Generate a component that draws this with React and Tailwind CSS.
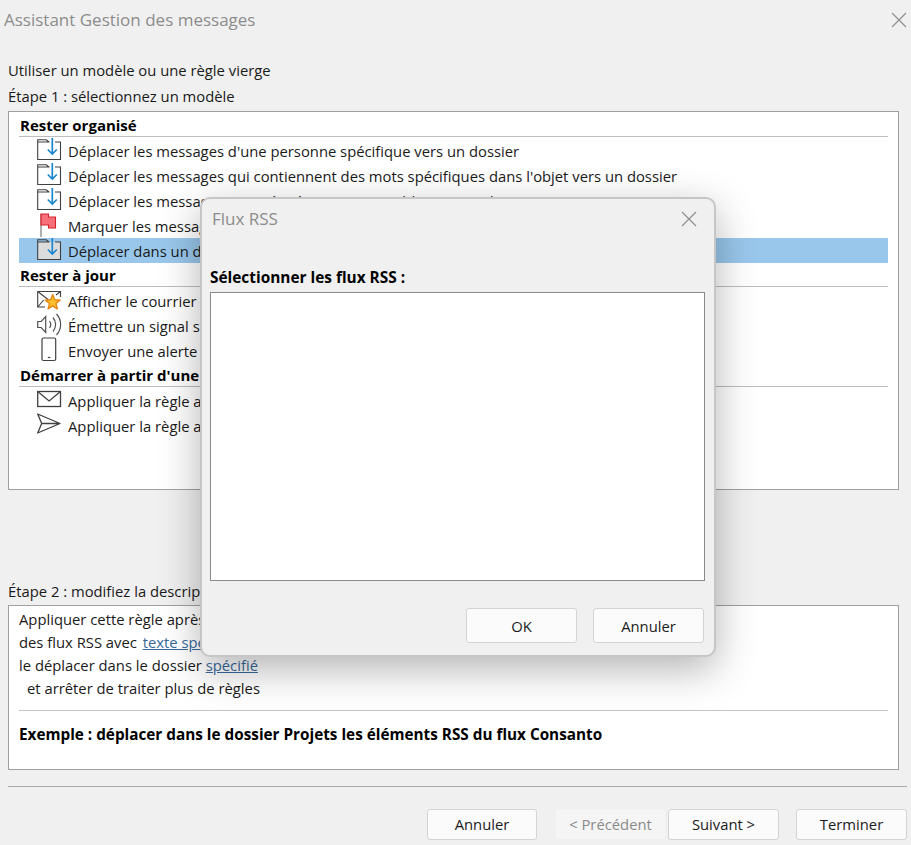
const FONT = "font-['Open_Sans','Noto_Sans',sans-serif]";

const Folder = ({ filled }) => (
  <svg width="27" height="24" viewBox="0 0 27 24" fill="none" className="overflow-visible">
    {filled && <path d="M0.700 3h23v17.500h-23z" fill="#dcdcdc" />}
    <path d="M12.500 3H0.700v17.500h22.800V3h-5.500M0.700 3V0.700h8.500L12 3" stroke="#404040" strokeWidth="1.100" />
    <path d="M15.300 -1v16M10.800 10.500l4.500 4.500 4.500-4.500" stroke="#1a86d0" strokeWidth="1.700" />
  </svg>
);
const Flag = () => (
  <svg width="27" height="24" viewBox="0 0 27 24" fill="none" className="overflow-visible">
    <path d="M4 0v23" stroke="#606060" strokeWidth="1" />
    <path d="M4 0h7.500v3h7v11h-7v-3H4z" fill="#f76f78" stroke="#d5202c" strokeWidth="1.100" />
  </svg>
);
const MailStar = () => (
  <svg width="27" height="24" viewBox="0 0 27 24" fill="none" className="overflow-visible">
    <path d="M8 18H0.700V2.500h22.800V8" stroke="#404040" strokeWidth="1.100" />
    <path d="M0.700 2.500l11 8.500M23.500 2.500L19 6M0.700 18l6-7" stroke="#404040" strokeWidth="1.100" />
    <path d="M15.700 5.500L17.700 10.750 23.300 11.030 18.930 14.550 20.400 19.970 15.700 16.900 11 19.970 12.470 14.550 8.100 11.030 13.700 10.750z" fill="#fbc02d" stroke="#e8830c" strokeWidth="1.300" strokeLinejoin="round" />
  </svg>
);
const Speaker = () => (
  <svg width="27" height="24" viewBox="0 0 27 24" fill="none" className="overflow-visible">
    <path d="M0.700 7.500h3.500l4.500-5v16l-4.500-5H0.700z" stroke="#505050" strokeWidth="1.200" />
    <path d="M12.500 7c1.500 2 1.500 5 0 7M16 3.500c3.500 4 3.500 10 0 14M19.500 0c5.500 6 5.500 15 0 21" stroke="#505050" strokeWidth="1.200" />
  </svg>
);
const Phone = () => (
  <svg width="27" height="24" viewBox="0 0 27 24" fill="none" className="overflow-visible">
    <rect x="5" y="-1" width="13.700" height="22.500" rx="1.500" stroke="#404040" strokeWidth="1.200" />
    <path d="M10.800 18.500h2.500" stroke="#404040" strokeWidth="1.200" />
  </svg>
);
const Mail = () => (
  <svg width="27" height="20" viewBox="0 0 27 20" fill="none" className="overflow-visible">
    <rect x="0.700" y="0.500" width="22.800" height="15" stroke="#404040" strokeWidth="1.300" />
    <path d="M0.700 0.500l11.400 9.500 11.400-9.500" stroke="#404040" strokeWidth="1.300" />
  </svg>
);
const Send = () => (
  <svg width="27" height="20" viewBox="0 0 27 20" fill="none" className="overflow-visible">
    <path d="M0.700 -2L23 7.500 0.700 17 4.700 7.500zM4.700 7.500H23" stroke="#404040" strokeWidth="1.300" strokeLinejoin="round" />
  </svg>
);

const Heading = ({ children }) => (
  <div className="h-[24px] mb-[1px] flex items-center font-bold text-[15px] text-black border-b border-[#bdbdbd] mx-[10px] pl-[1px] pt-[2px] leading-none">{children}</div>
);
const Row = ({ icon, children, selected }) => (
  <div className={`h-[25px] flex items-center mx-[10px] pl-[18px] gap-[4px] whitespace-nowrap ${selected ? "bg-[#99c7eb]" : ""}`}>
    <span className="w-[27px] flex shrink-0">{icon}</span>
    <span className="pt-[2px]">{children}</span>
  </div>
);
const Btn = ({ children, disabled, className = "h-[31px]" }) => (
  <button className={`w-[111px] rounded-[3px] border ${className} ${disabled ? "border-[#f0f0f0] bg-[#f5f5f5] text-[#8a8a8a]" : "border-[#d4d4d4] bg-[#fbfbfb] text-[#1a1a1a]"}`}>{children}</button>
);

export default function App() {
  return (
    <div className={`relative w-[911px] h-[845px] overflow-hidden bg-[#f0f0f0] text-[14.800px] text-[#1a1a1a] ${FONT}`}>
      <div className="h-[40px] flex items-center justify-between pl-[4px] pr-[4px]">
        <span className="text-[17px] text-[#8c8c8c]">Assistant Gestion des messages</span>
        <svg width="16" height="16" viewBox="0 0 16 16" stroke="#8c8c8c" strokeWidth="1.100"><path d="M1 1l14 14M15 1L1 15" /></svg>
      </div>
      <div className="mt-[18px] ml-[8px] h-[25px] leading-[25px]">Utiliser un modèle ou une règle vierge</div>
      <div className="ml-[8px] h-[28px] leading-[26px]">Étape 1 : sélectionnez un modèle</div>

      <div className="ml-[8px] w-[891px] h-[379px] border border-[#a0a0a0] bg-white pt-[1px]">
        <Heading>Rester organisé</Heading>
        <Row icon={<Folder />}>Déplacer les messages d'une personne spécifique vers un dossier</Row>
        <Row icon={<Folder />}>Déplacer les messages qui contiennent des mots spécifiques dans l'objet vers un dossier</Row>
        <Row icon={<Folder />}>Déplacer les messages envoyé(s) à un groupe public vers un dossier</Row>
        <Row icon={<Flag />}>Marquer les messages d'une personne pour suivi</Row>
        <Row icon={<Folder filled />} selected>Déplacer dans un dossier les éléments RSS d'un flux spécifique</Row>
        <Heading>Rester à jour</Heading>
        <Row icon={<MailStar />}>Afficher le courrier d'une personne dans la fenêtre Alerte</Row>
        <Row icon={<Speaker />}>Émettre un signal sonore à la réception de messages</Row>
        <Row icon={<Phone />}>Envoyer une alerte à mon appareil mobile</Row>
        <Heading>Démarrer à partir d'une règle vierge</Heading>
        <Row icon={<Mail />}>Appliquer la règle aux messages que je reçois</Row>
        <Row icon={<Send />}>Appliquer la règle aux messages que j'envoie</Row>
      </div>

      <div className="mt-[89px] ml-[8px] h-[26px] leading-[24px]">Étape 2 : modifiez la description de la règle</div>
      <div className="ml-[8px] w-[891px] h-[165px] border border-[#a0a0a0] bg-white pt-[2px] px-[10px]">
        <div className="leading-[23px]">Appliquer cette règle après l'arrivée du message</div>
        <div className="leading-[23px]">des flux RSS avec <span className="ml-[2px] text-[#38699c] underline">texte spécifique</span></div>
        <div className="leading-[23px]">le déplacer dans le dossier <span className="text-[#38699c] underline">spécifié</span></div>
        <div className="leading-[23px] pl-[8px]">et arrêter de traiter plus de règles</div>
        <div className="mt-[10px] border-t border-[#c4c4c4] w-[869px] pt-[12px] font-bold text-[15.300px] text-black leading-[23px]">Exemple : déplacer dans le dossier Projets les éléments RSS du flux Consanto</div>
      </div>
      <div className="mt-[16px] ml-[8px] w-[899px] border-t border-[#a8a8a8]" />
      <div className="mt-[22px] ml-[427px] w-[480px] flex">
        <Btn>Annuler</Btn>
        <span className="ml-[18px]"><Btn disabled>&lt; Précédent</Btn></span>
        <span className="ml-[2px]"><Btn>Suivant &gt;</Btn></span>
        <span className="ml-[17px]"><Btn>Terminer</Btn></span>
      </div>

      <div className="absolute left-[200px] top-[197px] w-[516px] h-[460px] rounded-[10px] border-2 border-[#c6c6c6] bg-[#f0f0f0] shadow-[0_12px_40px_rgba(0,0,0,0.3)] flex flex-col">
        <div className="h-[43px] flex items-center justify-between pl-[10px] pr-[17px] pb-[3px]">
          <span className="text-[17px] text-[#8c8c8c]">Flux RSS</span>
          <svg width="16" height="16" viewBox="0 0 16 16" stroke="#8c8c8c" strokeWidth="1.100"><path d="M1 1l14 14M15 1L1 15" /></svg>
        </div>
        <div className="mt-[24px] ml-[8px] h-[26px] leading-[24px] font-bold text-[15.400px] text-black">Sélectionner les flux RSS :</div>
        <div className="ml-[8px] w-[495px] h-[289px] border border-[#8a8a8a] bg-white" />
        <div className="mt-[27px] ml-[264px] flex gap-[16px]">
          <Btn className="h-[35px] pt-[2px]">OK</Btn>
          <Btn className="h-[35px] pt-[2px]">Annuler</Btn>
        </div>
      </div>
    </div>
  );
}
